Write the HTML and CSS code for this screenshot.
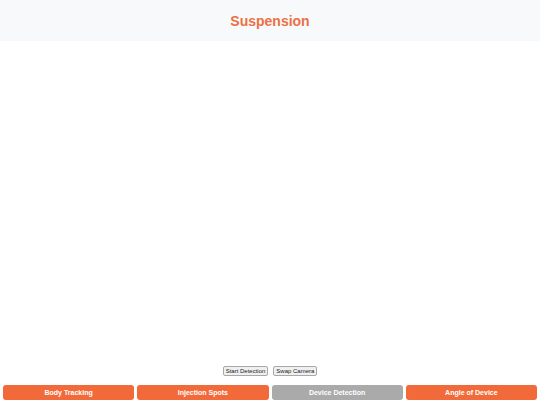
FILE: index.html
```html
<!DOCTYPE html>
<html>
<head>
<meta charset="utf-8">
<link rel="stylesheet" href="styles.css">
</head>
<body>
<div class="app">
  <header class="header"><h1 class="title">Suspension</h1></header>
  <main class="stage"></main>
  <div class="controls">
    <button class="ctl">Start Detection</button>
    <button class="ctl">Swap Camera</button>
  </div>
  <nav class="nav">
    <button class="tab">Body Tracking</button>
    <button class="tab">Injection Spots</button>
    <button class="tab tab-off">Device Detection</button>
    <button class="tab">Angle of Device</button>
  </nav>
</div>
</body>
</html>
```
FILE: styles.css
```css
html, body { margin: 0; padding: 0; background: #fff; }
body { font-family: "Liberation Sans", Arial, sans-serif; }
.app { width: 540px; height: 405px; display: flex; flex-direction: column; }
.header { height: 41px; background: #f8f9fa; display: flex; align-items: center; justify-content: center; }
.title { margin: 0; font-size: 14px; font-weight: bold; color: #ec6f45; }
.stage { flex: 1; }
.controls { display: flex; justify-content: center; gap: 5px; padding-bottom: 9px; }
.ctl { font-family: "Liberation Sans", Arial, sans-serif; font-size: 6px; height: 10px; padding: 0 2px; background: #f0f0f0; border: 1px solid #a8a8a8; border-radius: 2px; color: #222; line-height: 8px; }
.nav { display: grid; grid-template-columns: repeat(4, 1fr); gap: 3px; padding: 0 3px 5px 3px; }
.tab { height: 15px; border: none; border-radius: 3px; background: #f2693a; color: #fff; font-family: "Liberation Sans", Arial, sans-serif; font-weight: bold; font-size: 7px; padding: 0; }
.tab-off { background: #aaaaaa; }
```
